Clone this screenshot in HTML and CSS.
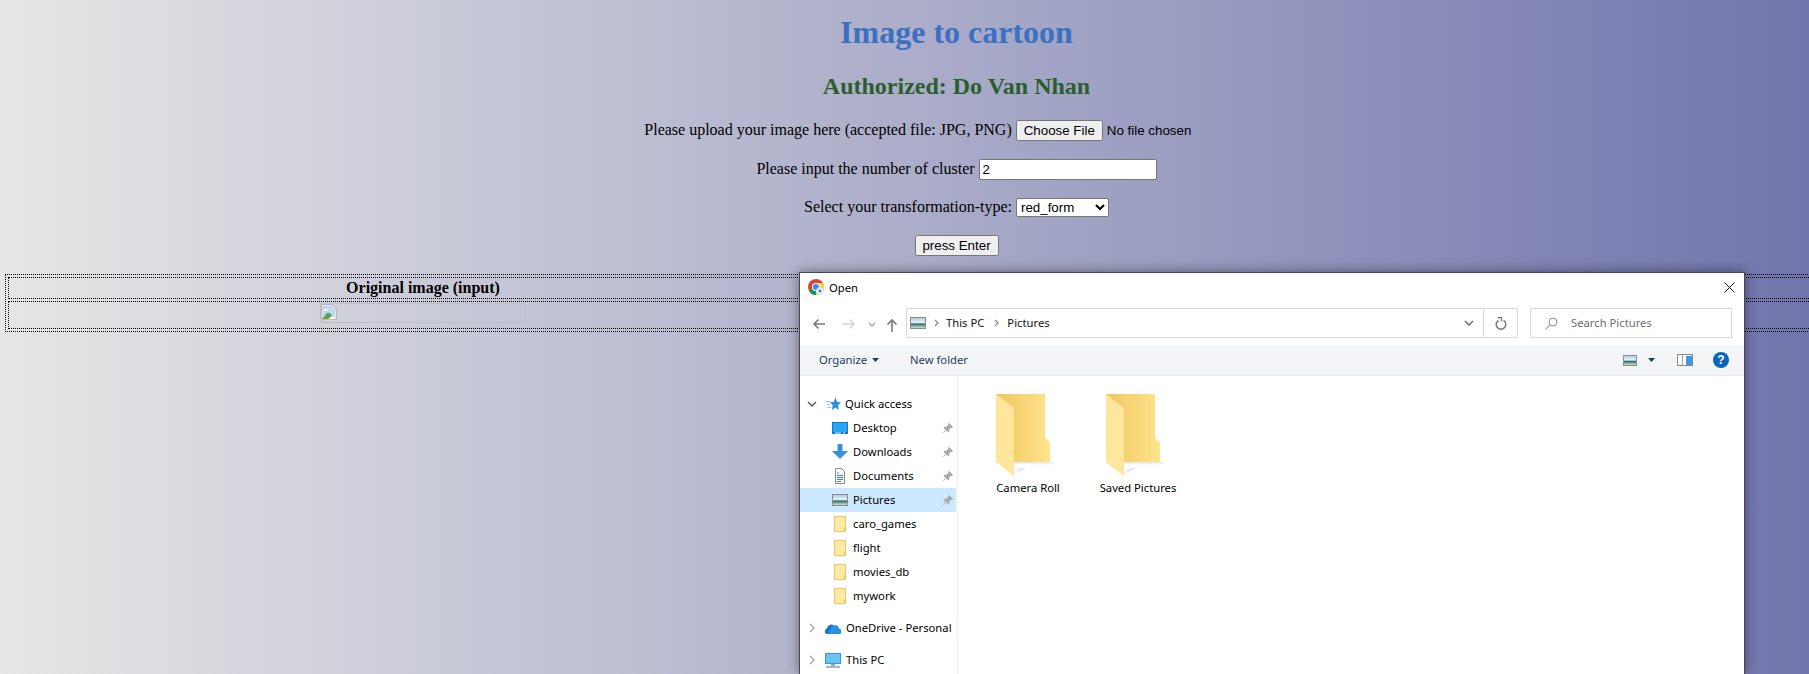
FILE: index.html
```html
<!DOCTYPE html>
<html lang="en">
<head>
<meta charset="utf-8">
<title>Image to cartoon</title>
<link rel="stylesheet" href="styles.css">
</head>
<body>
<div class="page">
  <h1 class="title">Image to cartoon</h1>
  <h2 class="author">Authorized: Do Van Nhan</h2>
  <form class="form">
    <p class="row">Please upload your image here (accepted file: JPG, PNG) <input class="file" type="file"></p>
    <p class="row">Please input the number of cluster <input class="number" type="text" value="2"></p>
    <p class="row">Select your transformation-type: <select class="select"><option>red_form</option><option>blue_form</option></select></p>
    <p class="row"><button class="submit" type="button">press Enter</button></p>
  </form>
  <table class="results">
    <tr><th class="col-a">Original image (input)</th><th class="col-b"></th></tr>
    <tr>
      <td class="cell"><span class="broken"><svg class="broken-icon" viewBox="0 0 16 16" width="16" height="16"><path d="M.5.5h10.500l4.500 4.500v10.500h-15z" fill="#dfe8f5" stroke="#b5b9c0"/><path d="M11 .5v4.500h4.500z" fill="#fff" stroke="#b5b9c0"/><path d="M2 2h8v4h4v6H2z" fill="#bcd6f5"/><path d="M3 6c2-2 4-1 5 0l-5 1z" fill="#fff"/><path d="M1 15l5-6c2-1 4 1 5 3l4 3z" fill="#5fa33a"/><path d="M7 15l4-3 4 3z" fill="#fff"/></svg></span></td>
      <td class="cell"></td>
    </tr>
  </table>
</div>

<div class="dialog">
  <div class="titlebar">
    <svg class="chrome" viewBox="0 0 16 16" width="16" height="16">
      <circle cx="8" cy="8" r="8" fill="#db4437"/>
      <path d="M8 8L1 12a8 8 0 0 0 7 4z" fill="#0f9d58"/>
      <path d="M8 4h7.300A8 8 0 0 1 8 16l0-4z" fill="#ffcd40"/>
      <circle cx="8" cy="8" r="4" fill="#fff"/>
      <circle cx="8" cy="8" r="3" fill="#4285f4"/>
      <circle cx="12" cy="12" r="3.800" fill="#dce9fb"/>
      <circle cx="12" cy="12" r="1.300" fill="#2a6fd6"/>
    </svg>
    <span class="dialog-title">Open</span>
    <svg class="close" viewBox="0 0 11 11" width="11" height="11"><path d="M.5.5l10 10M10.500.5l-10 10" stroke="#111" fill="none"/></svg>
  </div>

  <div class="navbar">
    <svg class="nav-icon back" viewBox="0 0 14 12" width="14" height="12"><path d="M13 6H2M6.500 1.500L2 6l4.500 4.500" stroke="#7a7a7a" stroke-width="1.600" fill="none"/></svg>
    <svg class="nav-icon forward" viewBox="0 0 14 12" width="14" height="12"><path d="M1 6h11M7.500 1.500L12 6l-4.500 4.500" stroke="#d4d4d4" stroke-width="1.600" fill="none"/></svg>
    <svg class="nav-icon recent" viewBox="0 0 8 5" width="8" height="5"><path d="M1 1l3 3 3-3" stroke="#a8a8a8" stroke-width="1.300" fill="none"/></svg>
    <svg class="nav-icon up" viewBox="0 0 12 14" width="12" height="14"><path d="M6 14V2M1.500 6.500L6 2l4.500 4.500" stroke="#7a7a7a" stroke-width="1.600" fill="none"/></svg>
    <div class="address">
      <svg class="pic" viewBox="0 0 16 12" width="16" height="12"><use href="#pic-icon"/></svg>
      <svg class="crumb" viewBox="0 0 5 8" width="5" height="8"><path d="M1 1l3 3-3 3" stroke="#8a8a8a" stroke-width="1.300" fill="none"/></svg>
      <span class="crumb-text">This PC</span>
      <svg class="crumb crumb-next" viewBox="0 0 5 8" width="5" height="8"><path d="M1 1l3 3-3 3" stroke="#8a8a8a" stroke-width="1.300" fill="none"/></svg>
      <span class="crumb-text">Pictures</span>
      <span class="spring"></span>
      <svg class="addr-chev" viewBox="0 0 10 6" width="10" height="6"><path d="M1 1l4 4 4-4" stroke="#6d6d6d" stroke-width="1.500" fill="none"/></svg>
      <span class="refresh"><svg viewBox="0 0 12 13" width="12" height="13"><path d="M3.500 3.300A4.800 4.800 0 1 0 8.500 3.300" stroke="#777" stroke-width="1.500" fill="none"/><path d="M2.500.5h4v4" stroke="#777" stroke-width="1.300" fill="none"/></svg></span>
    </div>
    <div class="search">
      <svg class="search-icon" viewBox="0 0 13 13" width="13" height="13"><circle cx="8" cy="5" r="4" fill="none" stroke="#9a8f8f"/><path d="M5 8l-4.500 4.500" stroke="#b9a793" stroke-width="1.200"/></svg>
      <span class="search-text">Search Pictures</span>
    </div>
  </div>

  <div class="toolbar">
    <span class="tool">Organize</span>
    <svg class="caret" viewBox="0 0 7 4" width="7" height="4"><path d="M0 0h7L3.500 4z" fill="#1f3a5f"/></svg>
    <span class="tool new-folder">New folder</span>
    <span class="spring"></span>
    <svg class="view-icon" viewBox="0 0 14 11" width="14" height="11"><use href="#pic-icon2"/></svg>
    <svg class="caret view-caret" viewBox="0 0 7 4" width="7" height="4"><path d="M0 0h7L3.500 4z" fill="#1f3a5f"/></svg>
    <svg class="pane-icon" viewBox="0 0 16 12" width="16" height="12"><rect x=".5" y=".5" width="15" height="11" fill="#fff" stroke="#8a8a8a"/><rect x="9" y="2" width="6" height="9" fill="#3f97e6"/><path d="M5.500 1v10" stroke="#a0a0a0"/></svg>
    <svg class="help-icon" viewBox="0 0 16 16" width="16" height="16"><circle cx="8" cy="8" r="8" fill="#0a66bd"/><text x="8" y="12.200" text-anchor="middle" class="help-mark">?</text></svg>
  </div>

  <div class="body">
    <nav class="tree">
      <div class="tree-head first"><svg class="twist" viewBox="0 0 10 6" width="10" height="6"><path d="M1 1l4 4 4-4" stroke="#555" stroke-width="1.400" fill="none"/></svg>
        <svg class="head-icon" viewBox="0 0 15 15" width="15" height="15"><path d="M9.500 .5l1.600 4.500 3.900.3-3 3 .9 4.700-3.400-2.500-3.600 2.500.9-4.700-3-3 3.900-.3z" fill="#2b8fe0"/><path d="M0 4.500h4M1 7.500h3M1.500 10.500h3.500" stroke="#8cc4f0"/></svg>
        <span class="label">Quick access</span></div>
      <div class="tree-item"><svg viewBox="0 0 16 12" width="16" height="12"><rect width="16" height="12" fill="#1277d4"/><rect x="1" y="1" width="14" height="9" fill="#2ea4f0"/><path d="M3 11h6M11 11h2" stroke="#dff"/></svg><span class="label">Desktop</span><svg class="pin" viewBox="0 0 10 10" width="10" height="10"><use href="#pin-icon"/></svg></div>
      <div class="tree-item"><svg viewBox="0 0 16 16" width="16" height="16"><path d="M5.500 0h5v7H16l-8 8-8-8h5.500z" fill="#3c8fdc"/></svg><span class="label">Downloads</span><svg class="pin" viewBox="0 0 10 10" width="10" height="10"><use href="#pin-icon"/></svg></div>
      <div class="tree-item"><svg viewBox="0 0 16 16" width="16" height="16"><path d="M3.500 .5h6l3 3v12h-9z" fill="#fff" stroke="#8a8a8a"/><path d="M5 5h2M5 7.500h6M5 9.500h6M5 11.500h6M5 13.500h4" stroke="#3a85c8"/></svg><span class="label">Documents</span><svg class="pin" viewBox="0 0 10 10" width="10" height="10"><use href="#pin-icon"/></svg></div>
      <div class="tree-item selected"><svg viewBox="0 0 16 12" width="16" height="12"><use href="#pic-icon"/></svg><span class="label">Pictures</span><svg class="pin" viewBox="0 0 10 10" width="10" height="10"><use href="#pin-icon"/></svg></div>
      <div class="tree-item"><svg class="mini" viewBox="0 0 12 16" width="12" height="16"><use href="#mini-folder"/></svg><span class="label">caro_games</span></div>
      <div class="tree-item"><svg class="mini" viewBox="0 0 12 16" width="12" height="16"><use href="#mini-folder"/></svg><span class="label">flight</span></div>
      <div class="tree-item"><svg class="mini" viewBox="0 0 12 16" width="12" height="16"><use href="#mini-folder"/></svg><span class="label">movies_db</span></div>
      <div class="tree-item"><svg class="mini" viewBox="0 0 12 16" width="12" height="16"><use href="#mini-folder"/></svg><span class="label">mywork</span></div>
      <div class="tree-head drive"><svg class="twist side" viewBox="0 0 6 10" width="6" height="10"><path d="M1 1l4 4-4 4" stroke="#a6a6a6" stroke-width="1.400" fill="none"/></svg>
        <svg class="head-icon wide" viewBox="0 0 16 11" width="16" height="11"><path d="M2.500 11A2.500 2.500 0 0 1 2 6a4 4 0 0 1 7-3 3.500 3.500 0 0 1 5 3 2.500 2.500 0 0 1 0 5z" fill="#0f78d4"/><path d="M6 11a2.500 2.500 0 0 1 0-5 4 4 0 0 1 8 .5 2.300 2.300 0 0 1 0 4.500z" fill="#2c8fe0"/></svg>
        <span class="label">OneDrive - Personal</span></div>
      <div class="tree-head pc"><svg class="twist side" viewBox="0 0 6 10" width="6" height="10"><path d="M1 1l4 4-4 4" stroke="#a6a6a6" stroke-width="1.400" fill="none"/></svg>
        <svg class="head-icon wide" viewBox="0 0 16 15" width="16" height="15"><rect width="16" height="11" fill="#2e9be6"/><rect x="1" y="1" width="14" height="9" fill="#6cc0f4"/><path d="M6 11h4v2H6z" fill="#9aa6b0"/><path d="M1 14h14" stroke="#8f9ba6" stroke-width="1.500"/></svg>
        <span class="label">This PC</span></div>
    </nav>
    <main class="files">
      <div class="file-item"><svg viewBox="0 0 64 84" width="64" height="84"><use href="#big-folder"/></svg><span class="file-name">Camera Roll</span></div>
      <div class="file-item"><svg viewBox="0 0 64 84" width="64" height="84"><use href="#big-folder"/></svg><span class="file-name">Saved Pictures</span></div>
    </main>
  </div>
</div>

<svg class="defs" width="0" height="0" aria-hidden="true">
  <defs>
    <linearGradient id="sky" x1="0" y1="0" x2="0" y2="1"><stop offset="0" stop-color="#a6c8e8"/><stop offset=".45" stop-color="#e8f2f8"/><stop offset=".6" stop-color="#2f6a5a"/><stop offset=".75" stop-color="#7aa89a"/><stop offset="1" stop-color="#e0e8ea"/></linearGradient>
    <linearGradient id="back" x1="0" y1="0" x2="1" y2="0"><stop offset="0" stop-color="#f0c65f"/><stop offset="1" stop-color="#fee48d"/></linearGradient>
    <linearGradient id="shade" x1="0" y1="0" x2="0" y2="1"><stop offset="0" stop-color="#e4e4e4"/><stop offset="1" stop-color="#fff"/></linearGradient>
    <g id="pic-icon"><rect x=".5" y=".5" width="15" height="11" fill="url(#sky)" stroke="#8d8d8d"/></g>
    <g id="pic-icon2"><rect x=".5" y=".5" width="13" height="10" fill="url(#sky)" stroke="#8d8d8d"/></g>
    <g id="pin-icon"><path d="M6 0l4 4-1 1-1-.3L6 7l.3 1.500-1 1L3.200 7.300.5 10 0 9.500l2.700-2.700L.5 4.700l1-1L3 4l2.300-2L5 1z" fill="#a9a9a9"/></g>
    <g id="mini-folder"><rect x=".5" y=".5" width="11" height="15" fill="#fee9a6" stroke="#eec95d"/><path d="M10 11h1.500v4.500H10z" fill="#eec95d"/></g>
    <g id="big-folder">
      <path d="M18 68h38l4 3H22z" fill="url(#shade)"/>
      <path d="M18 78l6-4 6 0-12 8z" fill="url(#shade)"/>
      <path d="M0 0h49v44l5 4v20H18L0 0z" fill="url(#back)"/>
      <path d="M0 0l18 14v68L0 68z" fill="#fee69c"/>
    </g>
  </defs>
</svg>
</body>
</html>
```

FILE: styles.css
```css
html, body {
  margin: 0;
  height: 674px;
  overflow: hidden;
}
body {
  position: relative;
  background: linear-gradient(to right, #e6e6e6, #7175ad);
  font-family: "Liberation Serif", serif;
  font-size: 16px;
  color: #000;
}
.page {
  width: 1913px;
  text-align: center;
}
.title {
  margin: 0;
  padding-top: 14px;
  font-size: 32px;
  color: #3b70c2;
}
.author {
  margin: 22px 0 20px;
  font-size: 24px;
  color: #2b5e2e;
}
.form {
  margin: 0;
}
.row {
  margin: 18px 0;
}
.file, .number, .select, .submit {
  font-family: "Liberation Sans", sans-serif;
  font-size: 13.333px;
}
.file { width: 253px; }
.number { width: 170px; box-sizing: content-box; }
.select { width: 93px; }
.submit { width: 84px; height: 21px; padding: 0; }

.results {
  margin: 18px 0 0 5px;
  width: 1903px;
  table-layout: fixed;
  border: 1px dotted #000;
  border-spacing: 2px;
}
.results th, .cell {
  border: 1px dotted #000;
  padding: 1px;
}
.col-a { width: 826px; }
.broken {
  display: inline-block;
  box-sizing: border-box;
  width: 206px;
  height: 20px;
  border: 1px solid #bdbdc4;
  text-align: left;
}
.broken-icon { display: block; }

/* File dialog floats over the page */
.dialog {
  position: absolute;
  left: 799px;
  top: 272px;
  width: 946px;
  bottom: 0;
  box-sizing: border-box;
  display: flex;
  flex-direction: column;
  background: #fff;
  border: 1px solid #46465a;
  border-bottom: 0;
  box-shadow: 0 0 12px rgba(0, 0, 0, .45);
  font-family: "Noto Sans", sans-serif;
  font-size: 11.25px;
  color: #000;
  overflow: hidden;
}
.spring { flex: 1; }
.titlebar {
  flex: none;
  height: 30px;
  box-sizing: border-box;
  padding: 0 9px 2px 8px;
  display: flex;
  align-items: center;
}
.dialog-title { margin-left: 5px; flex: 1; }
.close { display: block; }

.navbar {
  flex: none;
  height: 42px;
  padding-top: 5px;
  box-sizing: border-box;
  display: flex;
  align-items: flex-start;
}
.nav-icon { flex: none; margin-top: 10px; }
.back { margin-left: 12px; }
.forward { margin-left: 16px; }
.recent { margin-left: 12px; margin-top: 14px; }
.up { margin-left: 10px; margin-top: 10px; }
.address {
  margin-left: 8px;
  width: 612px;
  height: 30px;
  box-sizing: border-box;
  border: 1px solid #d9d9d9;
  display: flex;
  align-items: center;
  padding-left: 3px;
}
.crumb { margin: 0 7px 0 8px; flex: none; }
.crumb-next { margin: 0 8px 0 10px; }
.crumb-text { color: #111; padding-bottom: 2px; }
.addr-chev { margin-right: 9px; }
.refresh {
  width: 33px;
  height: 28px;
  border-left: 1px solid #d9d9d9;
  display: flex;
  align-items: center;
  justify-content: center;
}
.search {
  margin-left: 12px;
  width: 202px;
  height: 30px;
  box-sizing: border-box;
  border: 1px solid #d9d9d9;
  display: flex;
  align-items: center;
  padding-left: 14px;
}
.search-text { margin-left: 13px; color: #6d6d6d; padding-bottom: 2px; }

.toolbar {
  flex: none;
  height: 31px;
  box-sizing: border-box;
  background: #f3f4f6;
  border-bottom: 1px solid #e6e7e9;
  display: flex;
  align-items: center;
  padding: 0 15px 0 19px;
}
.tool { color: #1f3a5f; padding-bottom: 2px; }
.caret { margin-left: 5px; flex: none; }
.new-folder { margin-left: 31px; }
.view-caret { margin: 0 22px 0 11px; }
.pane-icon { margin-right: 20px; }
.help-mark {
  font-family: "Liberation Sans", sans-serif;
  font-size: 12px;
  font-weight: bold;
  fill: #fff;
}

.body {
  flex: 1;
  display: flex;
  min-height: 0;
}
.tree {
  flex: none;
  width: 158px;
  box-sizing: border-box;
  border-right: 1px solid #f0f0f0;
  padding-top: 16px;
}
.label { padding-bottom: 2px; }
.tree-head {
  height: 24px;
  display: flex;
  align-items: center;
  padding-left: 7px;
  white-space: nowrap;
}
.tree-head.drive { margin-top: 8px; }
.tree-head.pc { margin-top: 8px; }
.twist { flex: none; width: 10px; }
.twist.side { width: 6px; margin: 0 2px; }
.head-icon { flex: none; margin-left: 9px; margin-right: 4px; }
.head-icon.wide { margin-left: 8px; margin-right: 5px; }
.tree-item {
  height: 24px;
  width: 156px;
  display: flex;
  align-items: center;
  padding-left: 32px;
  box-sizing: border-box;
}
.tree-item svg { flex: none; }
.tree-item .mini { margin: 0 2px; }
.tree-item .label { margin-left: 5px; flex: 1; }
.tree-item .pin { margin-right: 3px; }
.tree-item.selected { background: #cce8ff; }

.files {
  flex: 1;
  display: flex;
  align-items: flex-start;
  padding: 18px 0 0 15px;
}
.file-item {
  width: 110px;
  display: flex;
  flex-direction: column;
  align-items: center;
}
.file-item svg { display: block; }
.file-name { white-space: nowrap; margin-top: 2px; }
.defs { position: absolute; }
```
